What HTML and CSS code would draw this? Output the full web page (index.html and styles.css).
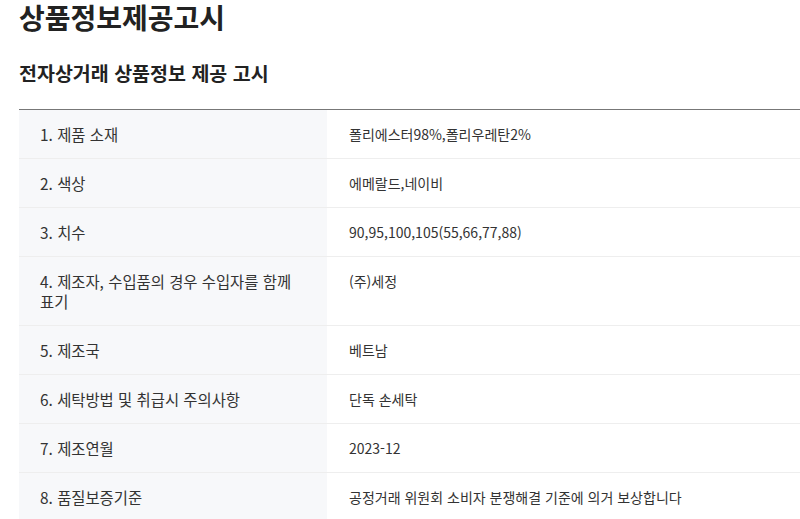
FILE: index.html
```html
<!DOCTYPE html>
<html lang="ko">
<head>
<meta charset="utf-8">
<link rel="stylesheet" href="styles.css">
</head>
<body>
<div class="page">
  <h1 class="title">상품정보제공고시</h1>
  <h2 class="subtitle">전자상거래 상품정보 제공 고시</h2>
  <table class="info">
    <tbody>
      <tr><th>1. 제품 소재</th><td>폴리에스터98%,폴리우레탄2%</td></tr>
      <tr><th>2. 색상</th><td>에메랄드,네이비</td></tr>
      <tr><th>3. 치수</th><td>90,95,100,105(55,66,77,88)</td></tr>
      <tr><th>4. 제조자, 수입품의 경우 수입자를 함께 표기</th><td>(주)세정</td></tr>
      <tr><th>5. 제조국</th><td>베트남</td></tr>
      <tr><th>6. 세탁방법 및 취급시 주의사항</th><td>단독 손세탁</td></tr>
      <tr><th>7. 제조연월</th><td>2023-12</td></tr>
      <tr><th>8. 품질보증기준</th><td>공정거래 위원회 소비자 분쟁해결 기준에 의거 보상합니다</td></tr>
    </tbody>
  </table>
</div>
</body>
</html>
```
FILE: styles.css
```css
html, body {
  margin: 0;
  padding: 0;
  background: #fff;
  overflow: hidden;
}
body {
  font-family: "Noto Sans CJK KR", "Noto Sans", sans-serif;
  color: #333;
}
.page {
  padding: 0 0 0 19px;
}
.title {
  margin: 0;
  font-size: 28px;
  line-height: 34px;
  font-weight: 700;
  color: #222;
}
.subtitle {
  margin: 25px 0 0;
  font-size: 19.5px;
  line-height: 28px;
  font-weight: 700;
  color: #222;
}
.info {
  margin-top: 22px;
  width: 820px;
  border-collapse: collapse;
  border-top: 1px solid #777;
  table-layout: fixed;
}
.info th, .info td {
  padding: 14px 21px;
  font-size: 14px;
  line-height: 20px;
  font-weight: 400;
  text-align: left;
  vertical-align: top;
  border-bottom: 1px solid #eee;
  color: #333;
  word-break: keep-all;
}
.info th {
  width: 260px;
  padding-right: 27px;
  font-size: 15.4px;
  background: #f7f8fa;
}
.info td {
  padding-left: 22px;
}
```
